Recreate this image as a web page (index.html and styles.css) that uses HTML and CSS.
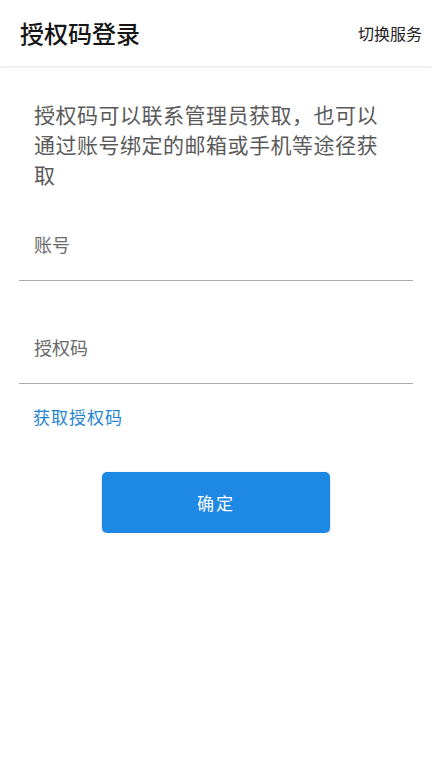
FILE: index.html
```html
<!DOCTYPE html>
<html lang="zh-CN">
<head>
<meta charset="utf-8">
<title>授权码登录</title>
<link rel="stylesheet" href="styles.css">
</head>
<body>
<header class="appbar">
  <h1 class="title">授权码登录</h1>
  <span class="action">切换服务</span>
</header>
<main class="content">
  <p class="desc">授权码可以联系管理员获取，也可以通过账号绑定的邮箱或手机等途径获取</p>
  <div class="fields">
    <label class="field"><input class="input" type="text" placeholder="账号"></label>
    <label class="field"><input class="input" type="text" placeholder="授权码"></label>
  </div>
  <a class="link">获取授权码</a>
  <div class="actions">
    <button class="btn" type="button">确定</button>
  </div>
</main>
</body>
</html>
```
FILE: styles.css
```css
html, body {
  margin: 0;
  padding: 0;
  background: #fff;
  font-family: "Noto Sans CJK SC", "Noto Sans", sans-serif;
}
.appbar {
  height: 66px;
  display: flex;
  align-items: center;
  justify-content: space-between;
  padding: 0 10px 0 20px;
  box-shadow: 0 1px 3px rgba(0,0,0,0.12);
  position: relative;
}
.title {
  margin: 0;
  font-size: 24px;
  font-weight: 500;
  color: #151515;
  line-height: 32px;
}
.action {
  font-size: 16px;
  color: #222;
  line-height: 24px;
}
.content {
  padding: 0 19px;
}
.desc {
  margin: 33px 0 0;
  padding: 0 15px;
  font-size: 21px;
  letter-spacing: 0.5px;
  line-height: 30px;
  color: #5a5a5a;
}
.fields {
  display: flex;
  flex-direction: column;
  gap: 11px;
}
.field {
  display: flex;
  align-items: flex-end;
  height: 91px;
  padding-bottom: 26px;
  box-sizing: border-box;
  border-bottom: 1.3px solid #ababab;
  height: 92px;
}
.input {
  border: 0;
  outline: none;
  background: transparent;
  padding: 0 15px;
  margin: 0;
  width: 100%;
  font-family: inherit;
  font-size: 18px;
  line-height: 20px;
  height: 20px;
  color: #333;
}
.input::placeholder {
  color: #6a6a6a;
}
.link {
  display: block;
  margin-top: 21px;
  padding-left: 14px;
  font-size: 17px;
  line-height: 24px;
  letter-spacing: 1px;
  color: #2484d0;
}
.actions {
  display: flex;
  justify-content: center;
  margin-top: 43px;
}
.btn {
  width: 228px;
  height: 61px;
  border: 0;
  border-radius: 5px;
  background: #1e88e5;
  color: #fff;
  font-family: inherit;
  font-size: 17px;
  letter-spacing: 2px;
  box-shadow: 0 1px 3px rgba(0,0,0,0.2);
}
```
